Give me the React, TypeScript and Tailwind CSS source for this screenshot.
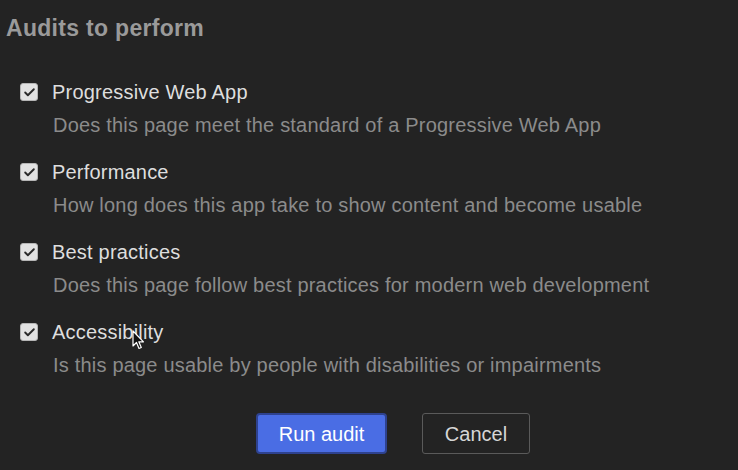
import { Check } from "lucide-react"

const audits = [
  {
    title: "Progressive Web App",
    desc: "Does this page meet the standard of a Progressive Web App",
  },
  {
    title: "Performance",
    desc: "How long does this app take to show content and become usable",
  },
  {
    title: "Best practices",
    desc: "Does this page follow best practices for modern web development",
  },
  {
    title: "Accessibility",
    desc: "Is this page usable by people with disabilities or impairments",
  },
]

function AuditRow({ title, desc, cursor }: { title: string; desc: string; cursor?: boolean }) {
  return (
    <div className="flex flex-col">
      <div className="flex items-center gap-[14px] h-6">
        <div className="w-[18px] h-[18px] rounded-[3px] bg-[#e2e2e2] border border-[#b5b5b5] flex items-center justify-center">
          <Check size={13} strokeWidth={3.5} className="text-[#2a2a2a]" />
        </div>
        <span className="relative text-[20px] leading-6 tracking-[0.2px] text-[#dedede]">
          {title}
          {cursor && (
            <svg
              className="absolute left-[80px] top-[10px]"
              width="13"
              height="20"
              viewBox="0 0 13 20"
            >
              <path
                d="M1 1 L1 16 L4.5 12.5 L7 18.5 L9.3 17.5 L6.8 11.8 L11.5 11.8 Z"
                fill="#111"
                stroke="#fff"
                strokeWidth="1.2"
                strokeLinejoin="round"
              />
            </svg>
          )}
        </span>
      </div>
      <p className="mt-[9px] pl-[33px] text-[20px] leading-6 tracking-[0.2px] text-[#8b8b8b]">
        {desc}
      </p>
    </div>
  )
}

export default function App() {
  return (
    <div
      className="w-[738px] h-[470px] bg-[#232323] overflow-hidden"
      style={{ fontFamily: '"Liberation Sans", Arial, sans-serif' }}
    >
      {/* Header */}
      <h1 className="pt-[14px] pl-[6px] text-[23px] leading-[28px] font-bold tracking-[0.3px] text-[#9a9a9a]">
        Audits to perform
      </h1>

      {/* Audit list */}
      <div className="mt-[38px] pl-[20px] flex flex-col gap-[23px]">
        {audits.map((a, i) => (
          <AuditRow key={a.title} title={a.title} desc={a.desc} cursor={i === 3} />
        ))}
      </div>

      {/* Footer */}
      <div className="mt-[36px] pl-[256px] flex items-center gap-[35px]">
        <button className="w-[131px] h-[41px] rounded-[4px] bg-[#4a6de4] border-2 border-[#2e428f] text-white text-[20px]">
          Run audit
        </button>
        <button className="w-[108px] h-[41px] rounded-[3px] border border-[#5a5a5a] text-[#d6d6d6] text-[20px]">
          Cancel
        </button>
      </div>
    </div>
  )
}
